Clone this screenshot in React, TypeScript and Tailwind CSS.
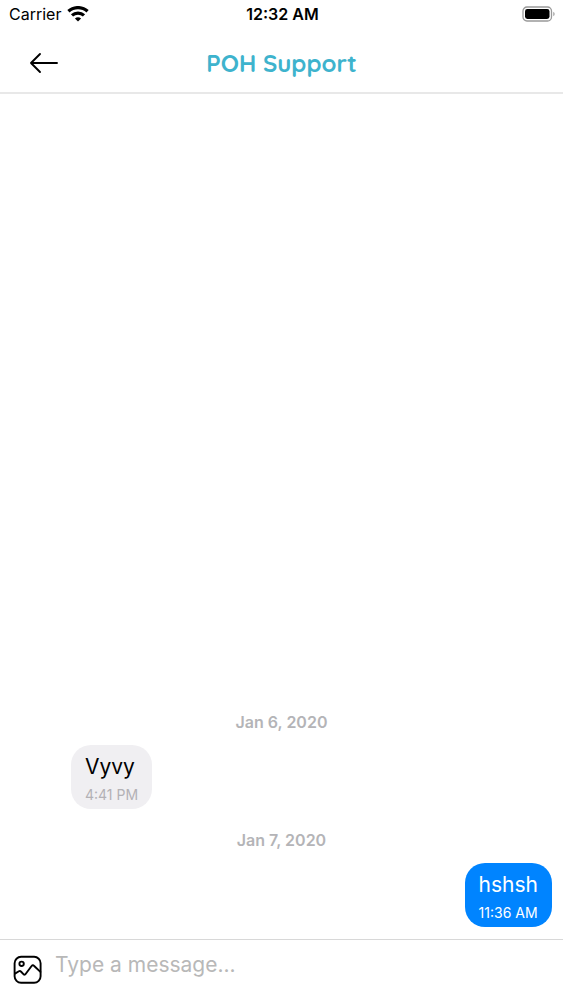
import React from "react";

type Message = {
  id: number;
  date: string;
  text: string;
  time: string;
  mine: boolean;
};

const messages: Message[] = [
  { id: 1, date: "Jan 6, 2020", text: "Vyvy", time: "4:41 PM", mine: false },
  { id: 2, date: "Jan 7, 2020", text: "hshsh", time: "11:36 AM", mine: true },
];

function WifiIcon() {
  return (
    <svg width="22" height="16" viewBox="0 0 22 16" fill="none" stroke="#000" strokeWidth="3.2" aria-hidden="true">
      <path d="M1.4 5.3a14.2 14.2 0 0 1 19.2 0" />
      <path d="M5 9.4a8.8 8.8 0 0 1 12 0" />
      <path d="M11 15.6 7.9 12.6a4.5 4.5 0 0 1 6.2 0Z" fill="#000" stroke="none" />
    </svg>
  );
}

function BatteryIcon() {
  return (
    <svg width="34" height="16" viewBox="0 0 34 16" fill="none" aria-hidden="true">
      <rect x="1" y="1" width="28.5" height="14" rx="4" stroke="#999" strokeWidth="1.3" />
      <rect x="3" y="3" width="24.5" height="10" rx="2.4" fill="#000" />
      <path d="M31.3 5.8c1.8.7 1.8 3.7 0 4.4Z" fill="#999" />
    </svg>
  );
}

function StatusBar() {
  return (
    <div className="grid h-7 grid-cols-3 items-center pr-[7px] pl-[9px] text-black">
      <div className="flex items-center gap-1.5 text-[16px] leading-5">
        <span>Carrier</span>
        <WifiIcon />
      </div>
      <div className="text-center text-[16px] leading-5 font-semibold whitespace-nowrap">12:32 AM</div>
      <div className="flex justify-end">
        <BatteryIcon />
      </div>
    </div>
  );
}

function Header() {
  return (
    <header className="grid h-[66px] grid-cols-[1fr_auto_1fr] items-center border-b-2 border-[#e8e8e8] px-7 pt-1.5">
      <button type="button" aria-label="Back" className="flex h-8 w-8 items-center">
        <svg
          width="32"
          height="24"
          viewBox="0 0 32 24"
          fill="none"
          stroke="#000"
          strokeWidth="1.9"
          strokeLinecap="round"
          strokeLinejoin="round"
          aria-hidden="true"
        >
          <path d="M12 3 3 12l9 9M3 12h26" />
        </svg>
      </button>
      <h1 className="font-['Quicksand','Inter',sans-serif] text-[24px] leading-8 font-bold text-[#3eb3cd]">
        POH Support
      </h1>
      <div />
    </header>
  );
}

function Bubble({ message }: { message: Message }) {
  return (
    <div className={message.mine ? "flex justify-end pr-[11px]" : "flex pl-[71px]"}>
      <div
        className={
          message.mine
            ? "rounded-[20px] bg-[#0084ff] px-3.5 pt-2 pb-1 text-white"
            : "rounded-[20px] bg-[#f0eff2] px-3.5 pt-2 pb-1 text-black"
        }
      >
        <p className="text-[21px] leading-7">{message.text}</p>
        <time
          className={
            message.mine
              ? "mt-1 block text-[14px] leading-5 text-white"
              : "mt-1 block text-[14px] leading-5 text-[#b3b1b5]"
          }
        >
          {message.time}
        </time>
      </div>
    </div>
  );
}

export default function App() {
  return (
    <div className="flex min-h-screen flex-col bg-white font-['Inter',sans-serif]">
      <StatusBar />
      <Header />
      <main className="flex flex-1 flex-col justify-end gap-[21px] pb-3">
        {messages.map((m) => (
          <section key={m.id}>
            <h2 className="mb-[13px] text-center text-[16px] leading-5 font-semibold text-[#b4b4b7]">{m.date}</h2>
            <Bubble message={m} />
          </section>
        ))}
      </main>
      <footer className="flex h-[61px] items-start border-t border-[#d8d8d8] px-3">
        <button type="button" aria-label="Attach a photo" className="mt-[15px]">
          <svg
            width="30"
            height="30"
            viewBox="0 0 30 30"
            fill="none"
            stroke="#000"
            strokeWidth="1.9"
            strokeLinecap="round"
            strokeLinejoin="round"
            aria-hidden="true"
          >
            <rect x="2.6" y="1.8" width="26" height="26" rx="6.5" />
            <circle cx="9.6" cy="8.8" r="2.2" />
            <path d="M3 18.6 6.9 16.2Q8 15.5 8.9 16.5L11.4 19.1Q12.7 20.4 13.8 18.8L19.6 11Q20.9 9.5 22.2 11L28.4 16.9" />
          </svg>
        </button>
        <input
          type="text"
          aria-label="Message"
          placeholder="Type a message..."
          className="mt-[9px] ml-[13px] h-8 min-w-0 flex-1 bg-transparent text-[21px] leading-8 text-black outline-none placeholder:text-[#b8b8b8]"
        />
      </footer>
    </div>
  );
}
